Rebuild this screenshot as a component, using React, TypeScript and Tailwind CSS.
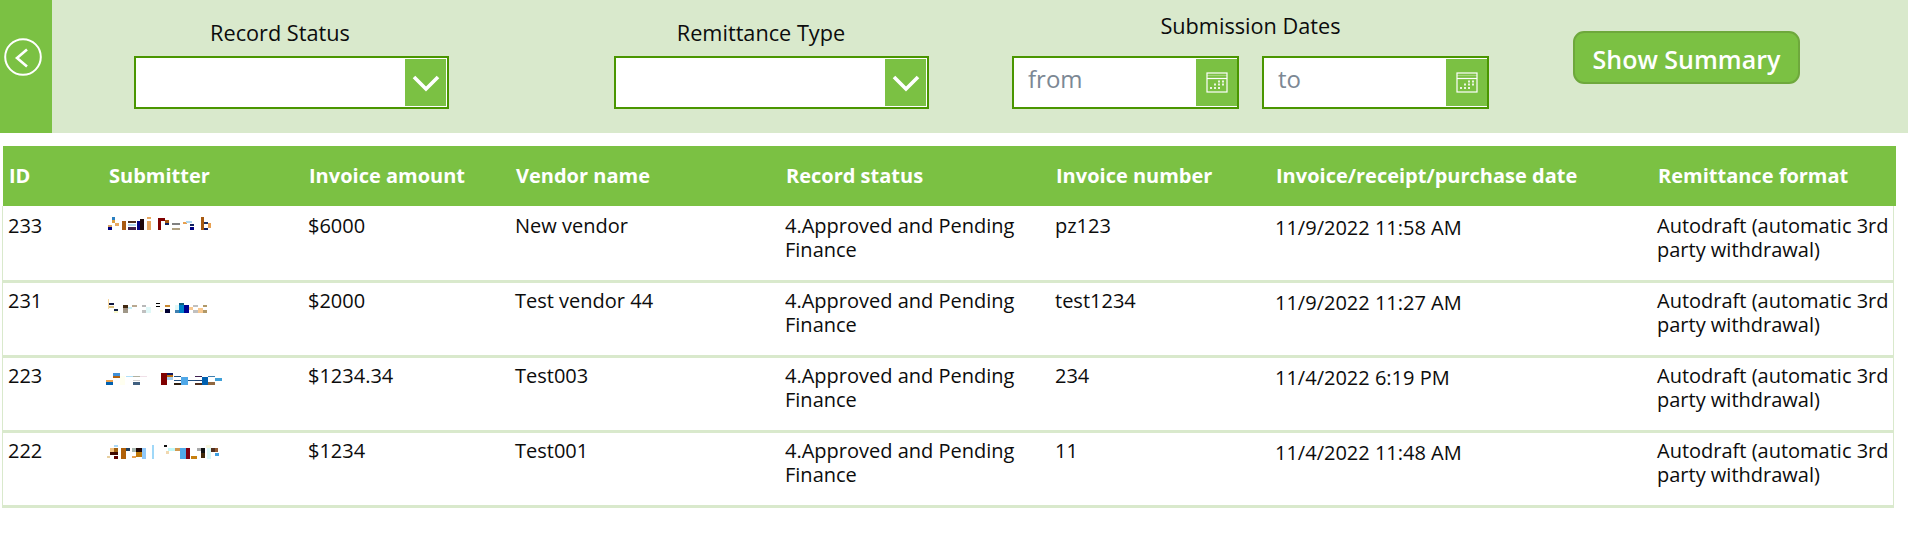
type Block = [number, number, number, number, string];

interface Row {
  id: string;
  amount: string;
  vendor: string;
  invoice: string;
  date: string;
  nameClass: string;
  blocks: Block[];
}

// pixelated (redacted) submitter names, in a 125x24 box
const name1: Block[] = [
  [12, 5, 3, 3, "#2a7fc0"], [12, 8, 3, 3, "#e0a040"], [15, 11, 4, 3, "#e8a860"], [8, 13, 4, 2, "#d8a060"], [8, 15, 4, 3, "#000080"],
  [22, 9, 4, 9, "#a85a10"], [28, 9, 8, 2, "#503020"], [28, 12, 8, 2, "#b0d8f0"], [28, 15, 8, 3, "#402048"], [37, 9, 3, 9, "#000080"],
  [40, 7, 4, 11, "#200808"], [47, 5, 4, 2, "#e8a860"], [47, 9, 4, 9, "#e8a860"],
  [58, 6, 3, 12, "#800000"], [61, 6, 4, 3, "#800000"], [65, 8, 4, 3, "#a85a10"], [65, 11, 4, 2, "#102060"],
  [72, 11, 8, 2, "#808080"], [72, 16, 8, 2, "#b0a080"], [83, 10, 4, 2, "#e8a050"], [86, 9, 6, 2, "#b0d8f0"], [90, 12, 4, 2, "#102060"], [90, 15, 4, 3, "#000080"],
  [101, 5, 3, 13, "#a85a10"], [104, 10, 4, 2, "#203060"], [108, 11, 3, 5, "#e8a050"], [104, 16, 4, 2, "#102060"],
];
const name2: Block[] = [
  [8, 1, 1, 10, "#f8d8a0"], [9, 5, 5, 2, "#101840"], [9, 8, 5, 2, "#d8c080"], [14, 11, 4, 2, "#102040"], [14, 13, 4, 2, "#f8f8c8"],
  [23, 7, 5, 3, "#402810"], [23, 10, 5, 2, "#a09080"], [23, 12, 5, 3, "#a09888"], [28, 9, 4, 2, "#c8f0f8"], [32, 7, 5, 2, "#b8a890"],
  [42, 7, 4, 2, "#b8b8b8"], [42, 12, 4, 3, "#c0c0c0"], [46, 9, 5, 6, "#e0f8f8"],
  [56, 5, 4, 1, "#000000"], [56, 8, 4, 1, "#000000"], [60, 12, 3, 2, "#f8f8d0"], [65, 7, 5, 2, "#c88830"], [65, 11, 5, 4, "#000030"],
  [75, 7, 4, 8, "#e0f8f8"], [79, 5, 5, 2, "#106080"], [79, 7, 5, 8, "#0080c8"], [75, 12, 4, 3, "#4080b0"], [84, 7, 5, 8, "#000090"], [89, 9, 4, 3, "#f8c890"],
  [93, 7, 5, 2, "#c0c0c0"], [93, 12, 5, 3, "#c0c0c0"], [98, 10, 5, 5, "#f8c890"], [103, 7, 4, 2, "#b09868"], [103, 12, 4, 3, "#b09868"],
];
const name3: Block[] = [
  [13, 5, 7, 3, "#4090d8"], [13, 8, 7, 2, "#b06010"], [6, 12, 7, 2, "#e8a050"], [6, 14, 7, 3, "#0060b0"], [20, 8, 5, 9, "#fffff0"],
  [26, 8, 7, 1, "#b0e0f8"], [33, 8, 7, 1, "#b0b0a0"], [33, 12, 7, 1, "#d0d0d0"], [33, 14, 7, 3, "#406080"], [40, 8, 7, 1, "#f0e0e8"],
  [61, 5, 6, 12, "#800000"], [67, 5, 6, 2, "#101860"], [67, 7, 6, 2, "#c07010"], [67, 9, 6, 3, "#a8d0f0"],
  [74, 8, 7, 1, "#205080"], [74, 12, 7, 1, "#205080"], [74, 15, 7, 2, "#302010"], [81, 9, 7, 8, "#50a8e8"],
  [88, 12, 7, 1, "#205080"], [95, 8, 7, 1, "#402050"], [95, 12, 7, 1, "#204070"], [95, 15, 7, 2, "#503020"], [102, 9, 6, 8, "#0060b0"],
  [108, 8, 7, 1, "#4080b0"], [108, 14, 7, 3, "#906840"], [115, 10, 7, 3, "#40a0d8"],
];
const name4: Block[] = [
  [14, 2, 4, 2, "#a8d8f8"], [10, 5, 4, 4, "#f0c080"], [14, 5, 4, 4, "#a06010"], [10, 9, 8, 3, "#400800"], [7, 13, 3, 2, "#e8d0a0"], [14, 13, 4, 3, "#600000"],
  [21, 5, 5, 11, "#b06008"], [26, 5, 4, 3, "#204060"], [32, 5, 4, 4, "#a8b8b0"], [32, 13, 4, 2, "#e8a050"], [36, 5, 6, 4, "#200808"], [36, 9, 6, 5, "#c07808"], [42, 5, 4, 11, "#90c8f8"],
  [52, 2, 2, 14, "#a0d8f8"], [64, 2, 3, 2, "#101010"], [66, 8, 3, 3, "#f0d8b0"],
  [68, 5, 7, 3, "#c0f8f8"], [75, 5, 5, 3, "#d09850"], [80, 5, 4, 11, "#50a8e8"], [84, 5, 2, 11, "#50a8e8"], [86, 5, 4, 11, "#800010"], [91, 13, 6, 3, "#c88010"],
  [97, 5, 4, 3, "#a8a8a8"], [101, 5, 4, 5, "#101010"], [101, 10, 4, 5, "#402808"], [106, 2, 5, 3, "#f8f8e0"], [107, 5, 4, 11, "#d8f8f8"], [111, 5, 4, 4, "#503020"],
  [115, 5, 3, 4, "#905830"], [115, 10, 4, 3, "#40a0e0"],
];

const rows: Row[] = [
  { id: "233", amount: "$6000", vendor: "New vendor", invoice: "pz123", date: "11/9/2022 11:58 AM", nameClass: "-ml-[8px] mt-[4px]", blocks: name1 },
  { id: "231", amount: "$2000", vendor: "Test vendor 44", invoice: "test1234", date: "11/9/2022 11:27 AM", nameClass: "-ml-[8px] mt-[15px]", blocks: name2 },
  { id: "223", amount: "$1234.34", vendor: "Test003", invoice: "234", date: "11/4/2022 6:19 PM", nameClass: "-ml-[8px] mt-[10px]", blocks: name3 },
  { id: "222", amount: "$1234", vendor: "Test001", invoice: "11", date: "11/4/2022 11:48 AM", nameClass: "-ml-[8px] mt-[10px]", blocks: name4 },
];

const headers = [
  "Submitter",
  "Invoice amount",
  "Vendor name",
  "Record status",
  "Invoice number",
  "Invoice/receipt/purchase date",
  "Remittance format",
];

const COLS = "grid grid-cols-[105px_200px_207px_270px_270px_220px_382px_1fr]";

function Dropdown() {
  return (
    <div className="flex h-[53px] w-[315px] border-2 border-[#4a9600] bg-white">
      <div className="flex-1" />
      <div className="flex w-[42px] items-center justify-center border-y border-r border-white bg-[#7bc143]">
        <svg width="28" height="18" viewBox="0 0 28 18" fill="none" stroke="white" strokeWidth="3.6">
          <path d="M2 3 L14 15 L26 3" />
        </svg>
      </div>
    </div>
  );
}

function DateInput({ placeholder }: { placeholder: string }) {
  return (
    <div className="flex h-[53px] w-[227px] border-2 border-[#4a9600] bg-white">
      <div className="flex-1 pl-[14px] text-[24px] leading-[42px] text-[#7c8894]">{placeholder}</div>
      <div className="flex w-[41px] items-center justify-center border-y border-white bg-[#7bc143]">
        <svg width="22" height="21" viewBox="0 0 22 21" fill="none" stroke="white">
          <rect x="1" y="1" width="20" height="19" strokeWidth="1.2" />
          <path d="M1 6.5 H21" strokeWidth="1.2" />
          <path d="M1 3.5 H21" strokeWidth="1.2" opacity="0.3" />
          <g fill="white" stroke="none" opacity="0.85">
            <rect x="12" y="8.5" width="2" height="2" />
            <rect x="16" y="8.5" width="2" height="2" />
            <rect x="8" y="11.5" width="2" height="2" />
            <rect x="12" y="11.5" width="2" height="2" />
            <rect x="16" y="11.5" width="2" height="2" />
            <rect x="4" y="15" width="2" height="2" />
            <rect x="8" y="15" width="2" height="2" />
            <rect x="12" y="15" width="2" height="2" />
          </g>
        </svg>
      </div>
    </div>
  );
}

function NameBlur({ blocks, className }: { blocks: Block[]; className: string }) {
  return (
    <svg width="125" height="24" viewBox="0 0 125 24" className={className} shapeRendering="crispEdges">
      {blocks.map(([x, y, w, h, c], i) => (
        <rect key={i} x={x} y={y} width={w} height={h} fill={c} />
      ))}
    </svg>
  );
}

export default function App() {
  return (
    <div className="h-[541px] w-[1912px] overflow-hidden bg-white font-['Open_Sans',sans-serif] text-[20px] leading-[24px] text-[#0c0c0c]">
      {/* filter bar */}
      <div className="flex h-[133px] w-[1908px] bg-[#d9e9cc]">
        <div className="flex w-[52px] bg-[#7bc143] pl-[4px] pt-[38px]">
          <svg width="38" height="38" viewBox="0 0 38 38" fill="none" stroke="white">
            <circle cx="19" cy="19" r="17.8" strokeWidth="2" />
            <path d="M23 11.5 L13 20 L23 28.5" strokeWidth="2.6" />
          </svg>
        </div>

        <div className="ml-[82px] pt-[18px]">
          <div className="mb-[8px] h-[30px] pr-[23px] text-center text-[21.7px] leading-[30px]">Record Status</div>
          <Dropdown />
        </div>

        <div className="ml-[165px] pt-[18px]">
          <div className="mb-[8px] h-[30px] pr-[21px] text-center text-[21.7px] leading-[30px]">Remittance Type</div>
          <Dropdown />
        </div>

        <div className="ml-[83px] pt-[11px]">
          <div className="mb-[15px] h-[30px] text-center text-[21.7px] leading-[30px]">Submission Dates</div>
          <div className="flex gap-[23px]">
            <DateInput placeholder="from" />
            <DateInput placeholder="to" />
          </div>
        </div>

        <div className="ml-[84px] pt-[31px]">
          <div className="flex h-[53px] w-[227px] items-center justify-center rounded-[11px] border-2 border-[#6ea83c] bg-[#7bc143] pt-[2px] text-[25px] font-semibold text-white">
            Show Summary
          </div>
        </div>
      </div>

      {/* table */}
      <div className="mt-[13px] pl-[2px]">
        <div className={`${COLS} ml-[1px] h-[60px] w-[1893px] items-center bg-[#7bc143] text-[20px] font-bold text-white`}>
          <div className="pl-[6px]">ID</div>
          {headers.map((h) => (
            <div key={h} className="pl-[1px]">{h}</div>
          ))}
        </div>
        {rows.map((r, i) => (
          <div
            key={r.id}
            className={`${COLS} w-[1892px] border-x border-b-[3px] border-[#d9e9cc] ${i === 0 ? "h-[77px] pt-[2px]" : "h-[75px]"}`}
          >
            <div className="pl-[5px] pt-[6px]">{r.id}</div>
            <div>
              <NameBlur blocks={r.blocks} className={r.nameClass} />
            </div>
            <div className="pt-[6px]">{r.amount}</div>
            <div className="pt-[6px]">{r.vendor}</div>
            <div className="pt-[6px] pr-[30px]">4.Approved and Pending Finance</div>
            <div className="pt-[6px]">{r.invoice}</div>
            <div className="pt-[8px]">{r.date}</div>
            <div className="pt-[6px]">Autodraft (automatic 3rd party withdrawal)</div>
          </div>
        ))}
      </div>
    </div>
  );
}
